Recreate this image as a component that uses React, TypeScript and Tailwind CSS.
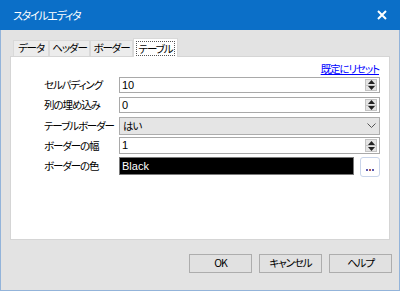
import React from 'react';

const jp = "font-['Meiryo_UI','Noto_Sans_CJK_JP',sans-serif] [font-feature-settings:'palt']";
const num = "font-['Liberation_Sans','Noto_Sans_CJK_JP',sans-serif]";
const label = 'text-[10.5px] tracking-[-1.1px] whitespace-nowrap text-black';

function Spinner() {
  return (
    <div className="absolute right-[2px] top-[1px] bottom-[1px] w-[12px] flex flex-col border border-[#c4c4c4] bg-[#e4e4e4]">
      <div className="flex-1 flex items-center justify-center border-b border-[#c4c4c4]">
        <svg width="7" height="4" viewBox="0 0 7 4">
          <path d="M0 4 L3.5 0 L7 4 Z" fill="#222" />
        </svg>
      </div>
      <div className="flex-1 flex items-center justify-center">
        <svg width="7" height="4" viewBox="0 0 7 4">
          <path d="M0 0 L3.5 4 L7 0 Z" fill="#222" />
        </svg>
      </div>
    </div>
  );
}

function NumberField({ value, h }: { value: string; h: string }) {
  return (
    <div className={`relative ${h} w-full bg-white border border-[#a9a9a9] flex items-center pl-[2px]`}>
      <span className={`${num} text-[11px] leading-none text-black`}>{value}</span>
      <Spinner />
    </div>
  );
}

const tabs = [
  { label: 'データ', w: 'w-[36px]' },
  { label: 'ヘッダー', w: 'w-[41px]' },
  { label: 'ボーダー', w: 'w-[43px]' },
];

export default function App() {
  return (
    <div className={`w-[400px] h-[291px] bg-[#e3e3e3] border border-t-0 border-[#93b4da] flex flex-col ${jp}`}>
      {/* title bar */}
      <div className="h-[30px] -mx-px bg-[#0b6fc8] flex items-center justify-between pl-[13px] pr-[13px] shrink-0">
        <span className="text-white text-[11px] tracking-[-1.3px] leading-none whitespace-nowrap">スタイルエディタ</span>
        <svg width="10" height="10" viewBox="0 0 10 10">
          <path d="M1 1 L9 9 M9 1 L1 9" stroke="#fff" strokeWidth="2" />
        </svg>
      </div>

      <div className="flex-1 flex flex-col px-[9px]">
        {/* tabs */}
        <div className="flex items-end h-[26px] pl-[3px]">
          {tabs.map((t) => (
            <div
              key={t.label}
              className={`${t.w} h-[16px] border border-b-0 border-[#d9d9d9] bg-[#ececec] flex items-center justify-center ${label} leading-none`}
            >
              {t.label}
            </div>
          ))}
          <div className="w-[45px] h-[19px] -mb-px relative z-10 bg-white border border-b-0 border-[#d9d9d9] flex items-center justify-center">
            <span className={`border border-dotted border-[#555] px-[2px] ${label} leading-[13px]`}>テーブル</span>
          </div>
        </div>

        {/* panel */}
        <div className="h-[184px] bg-white border border-[#d5d5d5] flex flex-col pt-[5px] pl-[33px] pr-[9px]">
          <div className="flex justify-end pr-[1px] h-[15px]">
            <span className="text-[10.5px] tracking-[-1.1px] leading-[13px] text-[#0000ff] underline whitespace-nowrap">既定にリセット</span>
          </div>
          <div className="grid grid-cols-[75px_1fr] auto-rows-[20px]">
            <div className={`${label} leading-[16px]`}>セルパディング</div>
            <div><NumberField value="10" h="h-[16px]" /></div>

            <div className={`${label} leading-[16px]`}>列の埋め込み</div>
            <div><NumberField value="0" h="h-[16px]" /></div>

            <div className={`${label} leading-[18px]`}>テーブルボーダー</div>
            <div>
              <div className="h-[18px] w-full bg-[#e5e5e5] border border-[#adadad] flex items-center justify-between pl-[3px] pr-[3px]">
                <span className={`${label} leading-none`}>はい</span>
                <svg width="9" height="6" viewBox="0 0 9 6">
                  <path d="M0.5 0.5 L4.5 4.5 L8.5 0.5" stroke="#555" strokeWidth="1" fill="none" />
                </svg>
              </div>
            </div>

            <div className={`${label} leading-[17px]`}>ボーダーの幅</div>
            <div><NumberField value="1" h="h-[17px]" /></div>

            <div className={`${label} leading-[18px]`}>ボーダーの色</div>
            <div className="flex items-start gap-[6px]">
              <div className="flex-1 h-[18px] bg-black border border-[#7a7a7a] flex items-center pl-[2px]">
                <span className={`${num} text-white text-[11px] leading-none`}>Black</span>
              </div>
              <div className="w-[20px] h-[20px] bg-white border border-[#c9d5ea] rounded-[3px] flex items-end justify-center pb-[5px]">
                <div className="flex gap-[1px]">
                  <span className="w-[2px] h-[2px] bg-[#5a5ab0]" />
                  <span className="w-[2px] h-[2px] bg-[#b05a5a]" />
                  <span className="w-[2px] h-[2px] bg-[#5a5ab0]" />
                </div>
              </div>
            </div>
          </div>
        </div>

        {/* buttons */}
        <div className="flex justify-end gap-[7px] mt-[14px] -mr-[2px]">
          {['OK', 'キャンセル', 'ヘルプ'].map((b) => (
            <div
              key={b}
              className={`w-[63px] h-[19px] bg-[#e1e1e1] border border-[#adadad] flex items-center justify-center ${label} leading-none`}
            >
              {b}
            </div>
          ))}
        </div>
      </div>
    </div>
  );
}
